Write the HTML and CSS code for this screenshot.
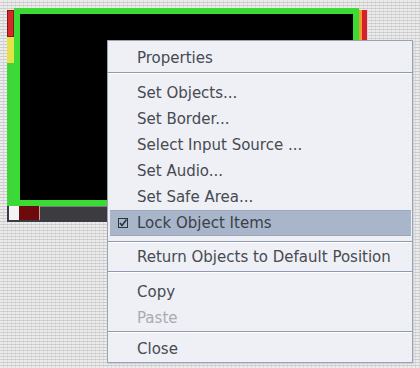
FILE: index.html
```html
<!DOCTYPE html>
<html>
<head>
<meta charset="utf-8">
<link rel="stylesheet" href="styles.css">
</head>
<body>
<div class="stage">
  <div class="monitor">
    <div class="meter-l">
      <div class="lv-red"></div>
      <div class="lv-yellow"></div>
      <div class="lv-green"></div>
    </div>
    <div class="frame"></div>
    <div class="meter-r"></div>
  </div>
  <div class="status">
    <div class="st-white"></div>
    <div class="st-red"></div>
    <div class="st-bar"></div>
  </div>

  <div class="menu">
    <div class="grp grp-a">
      <div class="item">Properties</div>
    </div>
    <div class="sep"></div>
    <div class="grp grp-b">
      <div class="item">Set Objects...</div>
      <div class="item">Set Border...</div>
      <div class="item">Select Input Source ...</div>
      <div class="item">Set Audio...</div>
      <div class="item">Set Safe Area...</div>
      <div class="item item-hl">
        <svg class="check" width="10" height="10" viewBox="0 0 10 10">
          <rect x="0.5" y="0.5" width="9" height="9" fill="none" stroke="#2e3440" stroke-width="1"/>
          <path d="M2 5 L4 7.5 L8.5 1.5" fill="none" stroke="#2e3440" stroke-width="1.6"/>
        </svg>
        Lock Object Items
      </div>
    </div>
    <div class="sep"></div>
    <div class="grp grp-c">
      <div class="item">Return Objects to Default Position</div>
    </div>
    <div class="sep"></div>
    <div class="grp grp-d">
      <div class="item">Copy</div>
      <div class="item item-dis">Paste</div>
    </div>
    <div class="sep"></div>
    <div class="grp grp-e">
      <div class="item">Close</div>
    </div>
  </div>
</div>
</body>
</html>
```

FILE: styles.css
```css
html, body {
  margin: 0;
  padding: 0;
}
body {
  width: 420px;
  height: 368px;
  overflow: hidden;
  background-color: #ececec;
  background-image:
    repeating-linear-gradient(to bottom, transparent 0, transparent 2px, #cdcdcd 2px, #cdcdcd 3px),
    repeating-linear-gradient(to right, transparent 0, transparent 3px, #dadada 3px, #dadada 4px);
  font-family: "DejaVu Sans", Verdana, sans-serif;
}
.stage {
  position: relative;
  width: 420px;
  height: 368px;
  padding-top: 8px;
  box-sizing: border-box;
}
.monitor {
  display: flex;
  align-items: flex-start;
  margin-left: 7px;
}
.meter-l {
  width: 7px;
  height: 196px;
  margin-top: 2px;
  display: flex;
  flex-direction: column;
}
.lv-red {
  height: 27px;
  background: #d42a2a;
  box-shadow: inset 0 0 0 1px #8a1515;
}
.lv-yellow {
  height: 26px;
  background: #e6e04a;
}
.lv-green {
  flex: 1;
  background: #3fd63a;
}
.frame {
  width: 345px;
  height: 198px;
  box-sizing: border-box;
  border: 6px solid #3bdb35;
  border-top-width: 6px;
  background: #000;
}
.meter-r {
  width: 8px;
  height: 30px;
  margin-top: 2px;
  background: linear-gradient(to right, #e8a12a 0, #e8a12a 3px, #d8202c 3px);
}
.status {
  display: flex;
  margin-left: 7px;
  width: 352px;
  height: 16px;
  box-sizing: border-box;
  border-left: 2px solid #3b3b48;
  border-bottom: 2px solid #3b3b48;
  background: #3c3c40;
}
.st-white {
  width: 10px;
  background: #f4f4f4;
}
.st-red {
  width: 20px;
  background: #6e0a0c;
  border-right: 1px solid #c9a0a0;
}
.st-bar {
  flex: 1;
  border-top: 1px solid #7a7a7a;
}

.menu {
  position: absolute;
  left: 107px;
  top: 40px;
  width: 306px;
  height: 323px;
  box-sizing: border-box;
  background: #eef0f5;
  border: 1px solid #9aa3b4;
  box-shadow: 1px 1px 0 #cdd1d9;
  color: #474a52;
  font-size: 15px;
}
.grp-a { padding: 4px 0 1px; }
.grp-b { padding: 6px 0 5px; }
.grp-c { padding: 1px 0 1px; }
.grp-d { padding: 6px 0 0; }
.grp-e { padding: 3px 0 0; }
.sep {
  height: 1px;
  background: #8f9ab0;
  border-bottom: 1px solid #ffffff;
}
.item {
  height: 26px;
  line-height: 26px;
  padding-left: 29px;
  white-space: nowrap;
  position: relative;
}
.item-hl {
  background: #a9b6c9;
  margin: 0 1px 0 2px;
  padding-left: 27px;
  color: #3a3f4c;
  box-shadow: inset 0 1px 0 #9aa8bd, inset 0 -1px 0 #9aa8bd;
}
.check {
  position: absolute;
  left: 8px;
  top: 8px;
}
.item-dis {
  color: #a9abb2;
}
```
